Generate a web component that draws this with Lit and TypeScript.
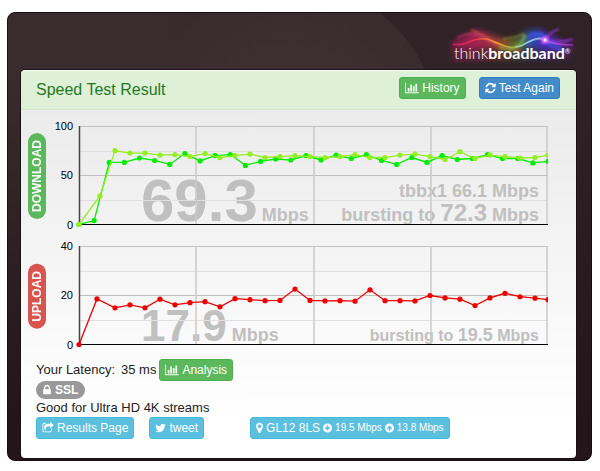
import { LitElement, html, svg, css, nothing } from "lit";
import { customElement, property } from "lit/decorators.js";

interface Glyph {
  box: string;
  width: number;
  d: string;
}

const GLYPHS: Record<string, Glyph> = {
  chart: {
    box: "0 0 2048 1792",
    width: 14,
    d: "M640 896v512h-256v-512h256zm384-512v1024h-256v-1024h256zm1024 1152v128h-2048v-1536h128v1408h1920zm-640-896v768h-256v-768h256zm384-384v1152h-256v-1152h256z",
  },
  refresh: {
    box: "128 0 1536 1792",
    width: 11,
    d: "M1639 1056q0 5-1 7-64 268-268 434.5t-478 166.5q-146 0-282.5-55t-243.5-157l-129 129q-19 19-45 19t-45-19-19-45v-448q0-26 19-45t45-19h448q26 0 45 19t19 45-19 45l-137 137q71 66 161 102t187 36q134 0 250-65t186-179q11-17 53-117 8-23 30-23h192q13 0 22.5 9.5t9.5 22.5zm25-800v448q0 26-19 45t-45 19h-448q-26 0-45-19t-19-45 19-45l138-138q-148-137-349-137-134 0-250 65t-186 179q-11 17-53 117-8 23-30 23h-199q-13 0-22.5-9.5t-9.5-22.5v-7q65-268 270-434.5t480-166.5q146 0 284 55.5t245 156.5l130-129q19-19 45-19t45 19 19 45z",
  },
  pin: {
    box: "384 0 1024 1792",
    width: 7,
    d: "M1152 640q0-106-75-181t-181-75-181 75-75 181 75 181 181 75 181-75 75-181zm256 0q0 109-33 179l-364 774q-16 33-47.5 52t-67.5 19-67.5-19-46.5-52l-365-774q-33-70-33-179 0-212 150-362t362-150 362 150 150 362z",
  },
  lock: {
    box: "320 0 1152 1792",
    width: 8,
    d: "M640 768h512v-192q0-106-75-181t-181-75-181 75-75 181v192zm832 96v576q0 40-28 68t-68 28h-960q-40 0-68-28t-28-68v-576q0-40 28-68t68-28h32v-192q0-184 132-316t316-132 316 132 132 316v192h32q40 0 68 28t28 68z",
  },
  bird: {
    box: "64 0 1664 1792",
    width: 11,
    d: "M1684 408q-67 98-162 167 1 14 1 42 0 130-38 259.5t-115.5 248.5-184.5 210.5-258 146-323 54.5q-271 0-496-145 35 4 78 4 225 0 401-138-105-2-188-64.5t-114-159.5q33 5 61 5 43 0 85-11-112-23-185.5-111.5t-73.5-205.5v-4q68 38 146 41-66-44-105-115t-39-154q0-88 44-163 121 149 294.5 238.5t371.5 99.5q-8-38-8-74 0-134 94.5-228.5t228.5-94.5q140 0 236 102 109-21 205-78-37 115-142 178 93-10 186-50z",
  },
  share: {
    box: "64 0 1664 1792",
    width: 12,
    d: "M1472 989v259q0 119-84.5 203.5t-203.5 84.5h-832q-119 0-203.5-84.5t-84.5-203.5v-832q0-119 84.5-203.5t203.5-84.5h255q13 0 22.5 9.5t9.5 22.5q0 27-26 32-77 26-133 60-10 4-16 4h-112q-66 0-113 47t-47 113v832q0 66 47 113t113 47h832q66 0 113-47t47-113v-214q0-19 18-29 28-13 54-37 16-16 35-8 21 9 21 29zm237-496l-384 384q-18 19-45 19-12 0-25-5-39-17-39-59v-192h-160q-323 0-438 131-119 137-74 473 3 23-20 34-8 2-12 2-16 0-26-13-10-14-21-31t-39.5-68.5-49.5-99.5-38.5-114-17.5-122q0-49 3.5-91t14-90 28-88 47-81.5 68.5-74 94.5-61.5 124.5-48.5 159.5-30.5 196.5-11h160v-192q0-42 39-59 13-5 25-5 26 0 45 19l384 384q19 19 19 45t-19 45z",
  },
  down: {
    box: "0 0 18 24",
    width: 9,
    d: "M9 3a9 9 0 1 0 0 18a9 9 0 1 0 0-18zM7.5 6.5h3v5l2-2l2 2l-5.500 5.500l-5.500-5.500l2-2l2 2z",
  },
  up: {
    box: "0 0 18 24",
    width: 9,
    d: "M9 3a9 9 0 1 0 0 18a9 9 0 1 0 0-18zM7.500 17.500h3v-5l2 2l2-2l-5.500-5.500l-5.500 5.500l2 2l2-2z",
  },
};

const glyph = (name: string) => {
  const g = GLYPHS[name];
  return html`<svg class="glyph" viewBox=${g.box} width=${g.width} height="12" aria-hidden="true">
    <path fill-rule="evenodd" d=${g.d}></path>
  </svg>`;
};

interface Sample {
  t: number;
  v: number;
}

interface Series {
  color: string;
  samples: Sample[];
}

/* Plot area inside the chart's drawing, in drawing units. */
const PLOT = { left: 29, right: 498, top: 10, bottom: 108.5 };
const SPAN = PLOT.right - PLOT.left;

const evenly = (values: number[]): Sample[] =>
  values.map((v, i) => ({ t: (i * SPAN) / (values.length - 1), v }));

/* A slow first sample, then one sample every 15 units. */
const warmedUp = (first: number, values: number[]): Sample[] =>
  values.map((v, i) => ({ t: i === 0 ? 0 : i === 1 ? first : Math.min(SPAN, 36 + (i - 2) * 15), v }));

const DOWNLOAD: Series[] = [
  {
    color: "#00ee00",
    samples: evenly([
      0, 4, 63, 63, 67.5, 65, 61, 72, 64.5, 70, 71, 60, 64, 66.5, 65.5, 70, 65.5, 70.5, 67, 71, 65, 61, 68, 63, 70,
      66, 67, 71, 67, 67, 62.5, 64,
    ]),
  },
  {
    color: "#93ee22",
    samples: warmedUp(21, [
      0, 29, 75, 72.5, 72.5, 70.5, 71, 69, 72, 68, 70, 71.5, 68, 69, 70, 69, 68, 69, 71, 68, 68, 70.5, 71.5, 69, 66,
      74, 67, 70.5, 69, 67.5, 68, 70.5,
    ]),
  },
];

const UPLOAD: Series[] = [
  {
    color: "#ee0000",
    samples: warmedUp(18, [
      0, 18.5, 14.9, 16.1, 14.9, 18.4, 16.1, 17, 17.4, 15.3, 18.6, 18.2, 17.8, 17.9, 22.5, 17.9, 17.7, 17.8, 17.6,
      22.2, 17.8, 17.8, 17.7, 19.9, 18.9, 18.4, 15.8, 18.9, 20.8, 19.4, 18.8, 18.2,
    ]),
  },
];

@customElement("speed-chart")
export class SpeedChart extends LitElement {
  @property() label = "";
  @property() tone = "down";
  @property({ type: Number }) max = 100;
  @property() speed = "";
  @property() burst = "";
  @property() single = "";
  @property({ attribute: false }) series: Series[] = [];

  static styles = css`
    :host {
      display: flex;
      align-items: center;
      gap: 4px;
    }
    .pill {
      box-sizing: border-box;
      width: 18px;
      padding: 7px 0;
      border-radius: 9px;
      color: #fff;
      font-size: 12px;
      font-weight: bold;
      line-height: 18px;
      writing-mode: vertical-rl;
      transform: rotate(180deg);
    }
    .down {
      background: #5cb85c;
    }
    .up {
      background: #d9534f;
    }
    .plot {
      flex: 1;
      min-width: 0;
      display: block;
    }
    .major {
      stroke: #c0c0c0;
    }
    .divider {
      stroke: #cacaca;
      stroke-width: 1.5;
    }
    .minor {
      stroke: #e0e0e0;
    }
    .side {
      stroke: #444;
      stroke-width: 1.5;
    }
    .base {
      stroke: #000;
    }
    .tick {
      font-size: 11px;
      fill: #000;
      text-anchor: end;
    }
    .reading {
      font-weight: bold;
      fill: #c0c0c0;
    }
    .end {
      text-anchor: end;
    }
    .s16 {
      font-size: 16px;
    }
    .s18 {
      font-size: 18px;
    }
    .s24 {
      font-size: 24px;
    }
    .s44 {
      font-size: 44px;
    }
    .s60 {
      font-size: 60px;
    }
  `;

  private y(v: number) {
    return PLOT.bottom - (v / this.max) * (PLOT.bottom - PLOT.top);
  }

  private drawSeries(s: Series) {
    const pts = s.samples.map((p) => [PLOT.left + p.t, this.y(p.v)]);
    return svg`<polyline fill="none" stroke=${s.color} stroke-width="1.3" points=${pts.map((p) => p.join(",")).join(" ")}></polyline>
      ${pts.map((p) => svg`<circle cx=${p[0]} cy=${p[1]} r="2.6" fill=${s.color}></circle>`)}`;
  }

  render() {
    const { left, right, top, bottom } = PLOT;
    const big = this.tone === "down";
    const row = (share: number) => Math.round(bottom - (bottom - top) * share) + 0.5;
    return html`
      <span class="pill ${this.tone}">${this.label}</span>
      <svg class="plot" viewBox="0 0 498 120" role="img" aria-label="${this.label} speed over time">
        <text class="reading ${big ? "s60" : "s44"}" x="91" y="105">${this.speed}<tspan class="s18" dx=${big ? 4 : 5}>Mbps</tspan></text>
        ${this.single
          ? svg`<text class="reading end s18" x="489" y="81">${this.single}</text>`
          : nothing}
        <text class="reading end ${big ? "s18" : "s16"}" x="489" y="105">bursting to <tspan class=${big ? "s24" : "s18"}>${this.burst}</tspan> Mbps</text>
        ${[0.25, 0.75].map((f) => svg`<line class="minor" x1=${left} x2=${right} y1=${row(f)} y2=${row(f)}></line>`)}
        ${[0.5, 1].map((f) => svg`<line class="major" x1=${left} x2=${right} y1=${row(f)} y2=${row(f)}></line>`)}
        ${[146, 264, 381, 497].map((x) => svg`<line class="divider" x1=${x} x2=${x} y1=${top} y2=${bottom}></line>`)}
        <line class="side" x1="29.5" x2="29.5" y1=${top} y2=${bottom}></line>
        <line class="base" x1=${left} x2=${right} y1=${bottom} y2=${bottom}></line>
        ${[0, 0.5, 1].map((f) => svg`<text class="tick" x="23" y=${row(f) + 3}>${this.max * f}</text>`)}
        ${this.series.map((s) => this.drawSeries(s))}
      </svg>
    `;
  }
}

@customElement("brand-logo")
export class BrandLogo extends LitElement {
  static styles = css`
    :host {
      display: block;
      width: 127px;
      height: 37px;
    }
    .art {
      display: block;
    }
    .word {
      font-family: Lato, "Open Sans", sans-serif;
      font-size: 16px;
      fill: #fff;
    }
    .thin {
      font-weight: 300;
    }
    .thick {
      font-weight: 700;
    }
    .mark {
      font-size: 7px;
    }
  `;

  render() {
    return html`
      <svg class="art" viewBox="0 0 127 37" width="127" height="37" role="img" aria-label="thinkbroadband">
        <defs>
          <linearGradient id="hue" gradientUnits="userSpaceOnUse" x1="0" x2="127" y1="0" y2="0">
            <stop offset="0" stop-color="#b0206c"></stop>
            <stop offset=".2" stop-color="#e8304c"></stop>
            <stop offset=".38" stop-color="#f3a52c"></stop>
            <stop offset=".52" stop-color="#8fb63a"></stop>
            <stop offset=".64" stop-color="#58b4dc"></stop>
            <stop offset=".78" stop-color="#b45cf4"></stop>
            <stop offset="1" stop-color="#8a2a94"></stop>
          </linearGradient>
          <linearGradient id="cloud" gradientUnits="userSpaceOnUse" x1="0" x2="127" y1="0" y2="0">
            <stop offset="0" stop-color="#a01850"></stop>
            <stop offset=".25" stop-color="#b02454"></stop>
            <stop offset=".4" stop-color="#a84a2c"></stop>
            <stop offset=".54" stop-color="#5c7a30"></stop>
            <stop offset=".66" stop-color="#2c48b8"></stop>
            <stop offset=".78" stop-color="#5a2cd8"></stop>
            <stop offset="1" stop-color="#7a2088"></stop>
          </linearGradient>
          <filter id="soft" x="-20%" y="-40%" width="140%" height="180%"><feGaussianBlur stdDeviation="3"></feGaussianBlur></filter>
          <filter id="mist" x="-20%" y="-40%" width="140%" height="180%"><feGaussianBlur stdDeviation="1"></feGaussianBlur></filter>
        </defs>
        <path filter="url(#soft)" fill="url(#cloud)" opacity=".4" d="M0 16L127 16L120 32L4 36Z"></path>
        <path filter="url(#soft)" fill="url(#cloud)" opacity=".9" d="M2 18Q14 12 24 5Q32 3 42 9Q56 14 66 14Q78 2 90 3Q102 10 110 14L122 19Q108 23 96 22Q80 20 70 23Q56 24 40 20Q20 26 2 18Z"></path>
        <g fill="none" stroke-width="2" filter="url(#mist)">
          <path stroke="#d23a78" opacity=".6" d="M8 12Q22 4 34 12T62 22"></path>
          <path stroke="#e0603c" opacity=".6" d="M22 4Q36 9 46 17T72 24"></path>
          <path stroke="#7cb83c" opacity=".8" d="M50 22Q70 26 76 9Q74 20 60 24"></path>
          <path stroke="#93a43e" opacity=".5" d="M54 13Q66 12 76 8"></path>
          <path stroke="#3a58f0" opacity=".9" d="M78 12Q86 2 94 13Q104 24 118 25"></path>
          <path stroke="#3b5cf0" opacity=".7" d="M80 20Q84 8 92 7Q100 16 112 21"></path>
          <path stroke="#a43ae0" opacity=".7" d="M92 18Q100 6 110 3M96 14Q110 18 124 13"></path>
        </g>
        <path fill="none" stroke="url(#hue)" stroke-width="1.600" d="M4 18Q12 20 20 16T38 13Q48 17 56 20T72 20Q84 12 92 13Q104 19 124 19"></path>
        <path fill="none" stroke="#d8e4f4" stroke-width=".8" opacity=".8" d="M66 21Q74 20 82 15T94 13"></path>
        <circle cx="96" cy="14" r="3.500" fill="#f06cff" opacity=".9" filter="url(#mist)"></circle>
        <circle cx="96" cy="14" r="1.400" fill="#fff"></circle>
        <text class="word" x="5" y="33"><tspan class="thin">think</tspan><tspan class="thick">broadband</tspan><tspan class="mark" dy="-5">®</tspan></text>
      </svg>
    `;
  }
}

@customElement("app-root")
export class AppRoot extends LitElement {
  static styles = css`
    :host {
      display: block;
      box-sizing: border-box;
      padding: 12px 8px 10px 7px;
      background: #fff;
      color: #222;
      font-family: "Liberation Sans", Arial, sans-serif;
      font-size: 13px;
      line-height: 18px;
    }
    .frame {
      padding: 0 15px 2px 13px;
      border: 1px solid #170c11;
      border-radius: 8px;
      background:
        linear-gradient(180deg, rgba(35, 22, 27, 0) 58px, #23161b 90%),
        radial-gradient(circle 148px at 283px 118px, #403034, #392c2f 99%, rgba(57, 44, 47, 0)),
        linear-gradient(90deg, #392c2e 25%, #2f2327 65%);
    }
    .brand {
      display: flex;
      justify-content: flex-end;
      padding: 13px 0 7px;
    }
    .panel {
      border-radius: 4px;
      overflow: hidden;
      border-top: 1px solid #fff;
      background: linear-gradient(180deg, #ebebeb 38px, #fff 90%);
      box-shadow: 0 0 0 1px #1b1014;
    }
    .head {
      display: flex;
      align-items: center;
      gap: 13px;
      padding: 6px 16px 10px 15px;
      border-bottom: 1px solid #d6e9c6;
      background: #dff0d8;
    }
    .title {
      flex: 1;
      margin: 0;
      padding-top: 4px;
      color: #1f7a1f;
      font-size: 16px;
      font-weight: normal;
      line-height: 18px;
    }
    .charts {
      padding: 6px 28px 0 7px;
      display: grid;
    }
    .details {
      padding: 3px 15px 19px;
    }
    .latency {
      display: flex;
      align-items: center;
      gap: 3px;
    }
    .value {
      padding-left: 3px;
    }
    .btn {
      box-sizing: border-box;
      display: inline-flex;
      align-items: center;
      gap: 3px;
      height: 22px;
      padding: 0 5px;
      border: 1px solid;
      border-radius: 3px;
      color: #fff;
      font: 12px/20px "Liberation Sans", Arial, sans-serif;
      text-decoration: none;
      white-space: nowrap;
      cursor: pointer;
    }
    .green {
      background: #5cb85c;
      border-color: #4cae4c;
    }
    .blue {
      background: #428bca;
      border-color: #357ebd;
    }
    .cyan {
      background: #5bc0de;
      border-color: #46b8da;
    }
    .glyph {
      flex: none;
      fill: currentColor;
    }
    .ssl {
      display: inline-flex;
      align-items: center;
      gap: 4px;
      padding: 0 7px;
      border-radius: 9px;
      background: #999;
      color: #fff;
      font-size: 12px;
      font-weight: bold;
      vertical-align: top;
    }
    .verdict {
      margin: 0;
    }
    .actions {
      display: flex;
      flex-wrap: wrap;
      gap: 15px;
    }
    .place {
      margin-left: 31px;
    }
    .small {
      font-size: 10px;
    }
  `;

  render() {
    return html`
      <main class="frame">
        <div class="brand"><brand-logo></brand-logo></div>
        <section class="panel">
          <header class="head">
            <h1 class="title">Speed Test Result</h1>
            <a class="btn green" href="#history">${glyph("chart")}History</a>
            <button class="btn blue" type="button">${glyph("refresh")}Test Again</button>
          </header>
          <div class="charts">
            <speed-chart
              label="DOWNLOAD"
              tone="down"
              .max=${100}
              speed="69.3"
              single="tbbx1 66.1 Mbps"
              burst="72.3"
              .series=${DOWNLOAD}
            ></speed-chart>
            <speed-chart label="UPLOAD" tone="up" .max=${40} speed="17.9" burst="19.5" .series=${UPLOAD}></speed-chart>
          </div>
          <div class="details">
            <div class="latency">
              <span>Your Latency:</span>
              <span class="value">35 ms</span>
              <a class="btn green" href="#analysis">${glyph("chart")}Analysis</a>
            </div>
            <div><span class="ssl">${glyph("lock")}SSL</span></div>
            <p class="verdict">Good for Ultra HD 4K streams</p>
            <div class="actions">
              <a class="btn cyan" href="#results">${glyph("share")}Results Page</a>
              <a class="btn cyan" href="#tweet">${glyph("bird")}tweet</a>
              <a class="btn cyan place" href="#postcode">
                ${glyph("pin")}<span>GL12 8LS</span>${glyph("down")}<span class="small">19.5 Mbps</span>${glyph("up")}<span
                  class="small"
                  >13.8 Mbps</span
                >
              </a>
            </div>
          </div>
        </section>
      </main>
    `;
  }
}
